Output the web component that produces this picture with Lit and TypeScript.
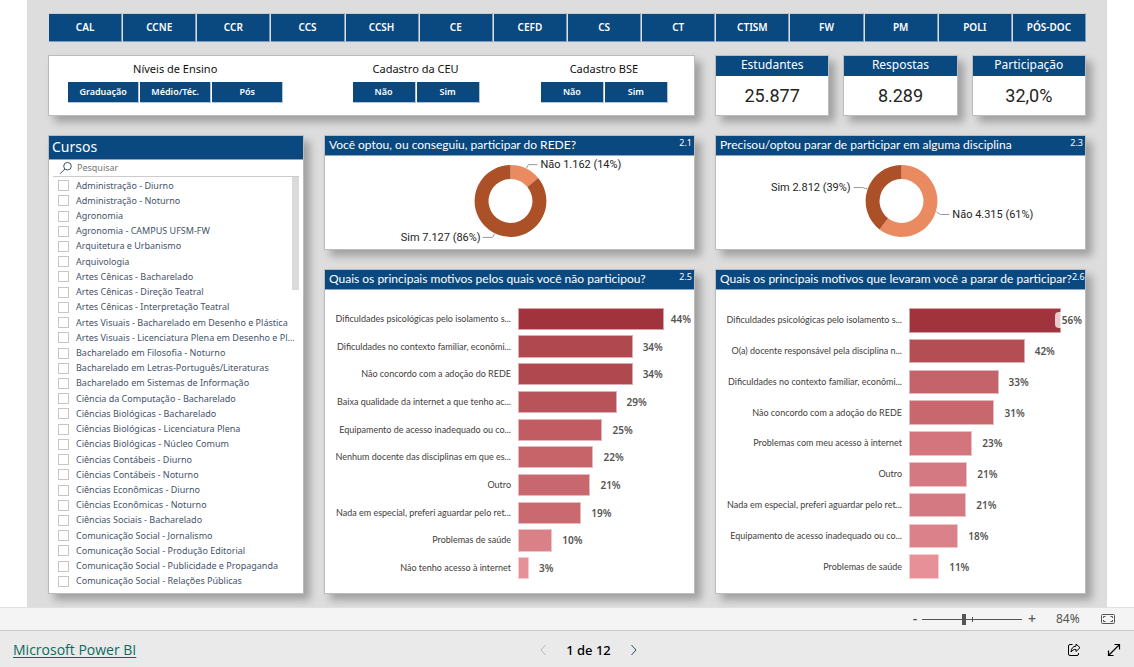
import { LitElement, html, css, svg } from "lit";
import { customElement, property } from "lit/decorators.js";
import { styleMap } from "lit/directives/style-map.js";

const UNITS = ["CAL", "CCNE", "CCR", "CCS", "CCSH", "CE", "CEFD", "CS", "CT", "CTISM", "FW", "PM", "POLI", "PÓS-DOC"];

const FILTERS = [
  { title: "Níveis de Ensino", kind: "wide", options: ["Graduação", "Médio/Téc.", "Pós"] },
  { title: "Cadastro da CEU", kind: "narrow", options: ["Não", "Sim"] },
  { title: "Cadastro BSE", kind: "narrow", options: ["Não", "Sim"] },
];

const KPIS = [
  { title: "Estudantes", value: "25.877" },
  { title: "Respostas", value: "8.289" },
  { title: "Participação", value: "32,0%" },
];

const COURSES = [
  "Administração - Diurno",
  "Administração - Noturno",
  "Agronomia",
  "Agronomia - CAMPUS UFSM-FW",
  "Arquitetura e Urbanismo",
  "Arquivologia",
  "Artes Cênicas - Bacharelado",
  "Artes Cênicas - Direção Teatral",
  "Artes Cênicas - Interpretação Teatral",
  "Artes Visuais - Bacharelado em Desenho e Plástica",
  "Artes Visuais - Licenciatura Plena em Desenho e Pl...",
  "Bacharelado em Filosofia - Noturno",
  "Bacharelado em Letras-Português/Literaturas",
  "Bacharelado em Sistemas de Informação",
  "Ciência da Computação - Bacharelado",
  "Ciências Biológicas - Bacharelado",
  "Ciências Biológicas - Licenciatura Plena",
  "Ciências Biológicas - Núcleo Comum",
  "Ciências Contábeis - Diurno",
  "Ciências Contábeis - Noturno",
  "Ciências Econômicas - Diurno",
  "Ciências Econômicas - Noturno",
  "Ciências Sociais - Bacharelado",
  "Comunicação Social - Jornalismo",
  "Comunicação Social - Produção Editorial",
  "Comunicação Social - Publicidade e Propaganda",
  "Comunicação Social - Relações Públicas",
];

interface Bar {
  label: string;
  value: number;
  length: number;
  color: string;
}

const NOT_JOINED: Bar[] = [
  { label: "Dificuldades psicológicas pelo isolamento s...", value: 44, length: 145, color: "#a0333c" },
  { label: "Dificuldades no contexto familiar, econômi...", value: 34, length: 114, color: "#b0494f" },
  { label: "Não concordo com a adoção do REDE", value: 34, length: 114, color: "#b0494f" },
  { label: "Baixa qualidade da internet a que tenho ac...", value: 29, length: 98, color: "#b9535a" },
  { label: "Equipamento de acesso inadequado ou co...", value: 25, length: 84, color: "#c15c63" },
  { label: "Nenhum docente das disciplinas em que es...", value: 22, length: 75, color: "#c6646a" },
  { label: "Outro", value: 21, length: 72, color: "#c8676d" },
  { label: "Nada em especial, preferi aguardar pelo ret...", value: 19, length: 63, color: "#ca6a70" },
  { label: "Problemas de saúde", value: 10, length: 34, color: "#da8087" },
  { label: "Não tenho acesso à internet", value: 3, length: 11, color: "#e79098" },
];

const STOPPED: Bar[] = [
  { label: "Dificuldades psicológicas pelo isolamento s...", value: 56, length: 151, color: "#a0333c" },
  { label: "O(a) docente responsável pela disciplina n...", value: 42, length: 115, color: "#b34e54" },
  { label: "Dificuldades no contexto familiar, econômi...", value: 33, length: 89, color: "#c4636a" },
  { label: "Não concordo com a adoção do REDE", value: 31, length: 85, color: "#c8676d" },
  { label: "Problemas com meu acesso à internet", value: 23, length: 63, color: "#d4757d" },
  { label: "Outro", value: 21, length: 58, color: "#d47981" },
  { label: "Nada em especial, preferi aguardar pelo ret...", value: 21, length: 57, color: "#d47981" },
  { label: "Equipamento de acesso inadequado ou co...", value: 18, length: 49, color: "#db8189" },
  { label: "Problemas de saúde", value: 11, length: 30, color: "#e79098" },
];

const AXIS_LENGTH = 175;

@customElement("bar-chart")
export class BarChart extends LitElement {
  @property({ attribute: false }) bars: Bar[] = [];

  static styles = css`
    :host {
      flex: 1;
      display: grid;
      grid-auto-rows: 1fr;
      padding: 15px 0 11px;
    }
    .row {
      display: grid;
      grid-template-columns: minmax(0, 186fr) minmax(0, 176fr);
      column-gap: 7px;
      align-items: center;
      min-height: 0;
    }
    .label {
      display: flex;
      justify-content: flex-end;
      font-family: "Lato", sans-serif;
      font-size: 9px;
      line-height: 12px;
      white-space: nowrap;
      color: #3f3d3b;
    }
    .track {
      display: flex;
      align-items: center;
      height: 80%;
    }
    .bar {
      box-sizing: border-box;
      height: 100%;
      flex: none;
      border: 1px solid rgba(255, 255, 255, 0.55);
    }
    .value {
      margin-left: 10px;
      font-size: 10px;
      line-height: 16px;
      font-weight: 600;
      color: #555351;
    }
    .longest {
      margin-left: 7px;
    }
    .overlap {
      margin-left: -6px;
      padding-left: 7px;
      border-radius: 4px;
      background: rgba(255, 255, 255, 0.75);
    }
  `;

  render() {
    return this.bars.map((b) => {
      const place = b.value > 50 ? "overlap" : b.value > 43 ? "longest" : "";
      return html`<div class="row">
        <span class="label">${b.label}</span>
        <div class="track">
          <div class="bar" style=${styleMap({ width: `${(b.length / AXIS_LENGTH) * 100}%`, background: b.color })}></div>
          <span class="value ${place}">${b.value}%</span>
        </div>
      </div>`;
    });
  }
}

const LIGHT = "#e98a60";
const DARK = "#ab5027";

@customElement("donut-chart")
export class DonutChart extends LitElement {
  @property({ type: Number }) no = 0;
  @property({ attribute: false }) labels: { text: string; x: number; y: number; anchor: string; line: string }[] = [];

  static styles = css`
    :host {
      flex: 1;
      display: flex;
      justify-content: center;
    }
    .plot {
      display: block;
      width: 370px;
      height: 93px;
    }
    .label {
      font-family: "Roboto", sans-serif;
      font-size: 11px;
      fill: #252423;
    }
    .leader {
      fill: none;
      stroke: #999;
    }
  `;

  private slice(from: number, to: number, color: string) {
    const at = (t: number, r: number) => {
      const a = t * 2 * Math.PI;
      return `${(186 + r * Math.sin(a)).toFixed(2)} ${(45 - r * Math.cos(a)).toFixed(2)}`;
    };
    const large = to - from > 0.5 ? 1 : 0;
    return svg`<path fill=${color} d="M${at(from, 36)} A36 36 0 ${large} 1 ${at(to, 36)} L${at(to, 22)} A22 22 0 ${large} 0 ${at(from, 22)} Z"></path>`;
  }

  render() {
    return html`<svg class="plot" viewBox="0 0 370 93" role="img" aria-label="Sim e Não">
      ${this.slice(0, this.no, LIGHT)} ${this.slice(this.no, 1, DARK)}
      ${this.labels.map(
        (l) => svg`<path class="leader" d=${l.line}></path>
          <text class="label" x=${l.x} y=${l.y} text-anchor=${l.anchor}>${l.text}</text>`
      )}
    </svg>`;
  }
}

const JOINED_LABELS = [
  { text: "Não 1.162 (14%)", x: 216, y: 12, anchor: "start", line: "M202 12 L204 8.5 H213" },
  { text: "Sim 7.127 (86%)", x: 156, y: 85, anchor: "end", line: "M158 81.5 H168 L170 78" },
];

const STOP_LABELS = [
  { text: "Sim 2.812 (39%)", x: 135, y: 35, anchor: "end", line: "M138 31.5 H147 L152 33" },
  { text: "Não 4.315 (61%)", x: 237, y: 62, anchor: "start", line: "M221 56 L225 58.5 H234" },
];

@customElement("app-root")
export class AppRoot extends LitElement {
  static styles = css`
    :host {
      display: flex;
      flex-direction: column;
      min-height: 100vh;
      background: #fff;
      font-family: "Noto Sans", sans-serif;
      color: #252423;
    }
    * {
      box-sizing: border-box;
    }
    button {
      margin: 0;
      padding: 0;
      border: 0;
      background: none;
      font: inherit;
      color: inherit;
    }
    h2 {
      margin: 0;
      font-weight: 400;
    }
    .report {
      flex: 1;
      display: flex;
      flex-direction: column;
      gap: 13px;
      margin: 0 27px;
      padding: 13px 21px;
      background: #ddd;
    }
    .units {
      display: grid;
      grid-template-columns: repeat(14, 1fr);
      gap: 1px;
      padding-left: 1px;
    }
    .unit {
      height: 29px;
      padding-bottom: 1px;
      background: #0a4880;
      border: 1px solid #7c9cbc;
      border-top-color: #c4ccd6;
      border-left-width: 0;
      font-size: 10px;
      line-height: 24px;
      font-weight: 600;
      color: #fff;
    }
    .board {
      flex: 1;
      display: grid;
      grid-template-columns: 256fr 371fr 371fr;
      grid-template-rows: 61px 115px 1fr;
      gap: 19px 20px;
    }
    .card {
      display: flex;
      flex-direction: column;
      min-width: 0;
      background: #fff;
      border: 1px solid #bcbcbc;
      box-shadow: 6px 6px 8px rgba(0, 0, 0, 0.28);
    }
    .filters {
      grid-column: span 2;
      display: grid;
      grid-template-columns: 252fr 228fr 148fr;
      padding: 3px 16px 0 0;
    }
    .filter {
      margin: 0;
      padding: 0;
      border: 0;
      min-width: 0;
    }
    .filter-title {
      padding: 0;
      width: 100%;
      font-size: 11px;
      line-height: 20px;
      text-align: center;
      color: #111;
    }
    .options {
      display: flex;
      justify-content: center;
      gap: 1px;
      padding: 3px 0 0 1px;
    }
    .option {
      height: 21px;
      background: #0a4880;
      border: 1px solid #b4c4d6;
      border-width: 0 1px 1px 0;
      font-size: 9px;
      line-height: 20px;
      font-weight: 600;
      color: #fff;
    }
    .wide {
      width: 71px;
    }
    .narrow {
      width: 63px;
    }
    .kpis {
      display: grid;
      grid-template-columns: repeat(3, 1fr);
      gap: 14px;
    }
    .kpi-title {
      height: 20px;
      background: #0a4880;
      font-size: 12px;
      line-height: 17px;
      text-align: center;
      color: #fff;
    }
    .kpi-value {
      flex: 1;
      display: grid;
      place-items: center;
      font-family: "Roboto", sans-serif;
      font-size: 18px;
      line-height: 20px;
    }
    .head {
      display: flex;
      justify-content: space-between;
      height: 20px;
      padding: 0 2px 0 4px;
      background: #0a4880;
      border-bottom: 1px solid #8fa9c4;
      font-family: "Lato", sans-serif;
      color: #fff;
      white-space: nowrap;
    }
    .title {
      font-size: 12px;
      line-height: 17px;
    }
    .code {
      font-family: "Noto Sans", sans-serif;
      font-size: 9px;
      line-height: 14px;
    }
    .courses {
      grid-row: span 2;
    }
    .courses-title {
      height: 24px;
      padding: 0 3px;
      background: #0a4880;
      border-bottom: 1px solid #8fa9c4;
      font-size: 14px;
      line-height: 21px;
      color: #fff;
    }
    .search {
      display: flex;
      align-items: center;
      gap: 4px;
      height: 17px;
      margin: 0 4px;
      padding-left: 6px;
      border-bottom: 1px solid #ccc;
    }
    .search-icon {
      flex: none;
      width: 14px;
      height: 14px;
    }
    .search-box {
      flex: 1;
      min-width: 0;
      padding: 0;
      border: 0;
      outline: 0;
      background: none;
      font: 9px/12px "Noto Sans", sans-serif;
    }
    .search-box::placeholder {
      color: #777;
      opacity: 1;
    }
    .list {
      position: relative;
      flex: 1;
      display: grid;
      grid-auto-rows: 1fr;
      padding: 1px 4px 4px 9px;
    }
    .scroll {
      position: absolute;
      top: 0;
      right: 4px;
      width: 7px;
      height: 113px;
      background: #dadada;
    }
    .course {
      display: flex;
      align-items: center;
      gap: 7px;
      min-height: 0;
      font-size: 9px;
      line-height: 12px;
      white-space: nowrap;
      color: #44546a;
    }
    .tick {
      appearance: none;
      flex: none;
      width: 11px;
      height: 11px;
      margin: 0;
      border: 1px solid #c8c6c4;
      background: #fff;
    }
    .zoombar {
      display: flex;
      align-items: center;
      justify-content: flex-end;
      height: 24px;
      padding-right: 18px;
      background: #f4f4f4;
      border-top: 1px solid #e0e0e0;
      border-bottom: 1px solid #c8c8c8;
      color: #555;
    }
    .step {
      width: 10px;
      height: 20px;
      font-size: 14px;
      line-height: 20px;
      font-weight: 500;
    }
    .slider {
      position: relative;
      display: flex;
      margin: 0 5px 0 2px;
    }
    .slider::after {
      content: "";
      position: absolute;
      left: 50px;
      top: 8px;
      width: 1px;
      height: 5px;
      background: #555;
    }
    .range {
      appearance: none;
      width: 100px;
      height: 20px;
      margin: 0;
      background: linear-gradient(#555, #555) center / 100% 1px no-repeat;
    }
    .range::-webkit-slider-thumb {
      appearance: none;
      width: 4px;
      height: 11px;
      background: #555;
    }
    .percent {
      width: 24px;
      margin: 0 20px 0 19px;
      font-size: 12px;
      line-height: 20px;
    }
    .icon {
      display: block;
      width: 16px;
      height: 16px;
      fill: none;
      stroke: currentColor;
    }
    .footer {
      display: grid;
      grid-template-columns: 1fr auto 1fr;
      align-items: center;
      height: 36px;
      padding: 2px 12px 0 13px;
      background: #eaeaea;
      color: #000;
    }
    .brand {
      justify-self: start;
      font-family: "Open Sans", sans-serif;
      font-size: 14px;
      line-height: 20px;
      color: #0b6a5c;
      text-decoration: underline;
      text-underline-offset: 2px;
    }
    .pager {
      display: flex;
      align-items: center;
      gap: 15px;
      margin-left: 42px;
      font-size: 13px;
      line-height: 20px;
      font-weight: 500;
    }
    .previous {
      color: #b8b8b8;
    }
    .next {
      color: #205060;
    }
    .actions {
      justify-self: end;
      display: flex;
      gap: 24px;
    }
  `;

  private head(title: string, code: string) {
    return html`<div class="head"><h2 class="title">${title}</h2><span class="code">${code}</span></div>`;
  }

  render() {
    return html`
      <main class="report">
        <nav class="units">${UNITS.map((u) => html`<button class="unit">${u}</button>`)}</nav>
        <div class="board">
          <section class="card filters">
            ${FILTERS.map(
              (f) => html`<fieldset class="filter">
                <legend class="filter-title">${f.title}</legend>
                <div class="options">${f.options.map((o) => html`<button class="option ${f.kind}">${o}</button>`)}</div>
              </fieldset>`
            )}
          </section>
          <div class="kpis">
            ${KPIS.map(
              (k) => html`<section class="card">
                <h2 class="kpi-title">${k.title}</h2>
                <div class="kpi-value">${k.value}</div>
              </section>`
            )}
          </div>
          <section class="card courses">
            <h2 class="courses-title">Cursos</h2>
            <div class="search">
              <svg class="search-icon" viewBox="0 0 14 14" fill="none" stroke="#3c5068" aria-hidden="true">
                <circle cx="8.5" cy="5.2" r="3.8"></circle>
                <path d="M5.8 8 L1 12.8"></path>
              </svg>
              <input class="search-box" type="search" placeholder="Pesquisar" aria-label="Pesquisar" />
            </div>
            <div class="list">
              ${COURSES.map((c) => html`<label class="course"><input class="tick" type="checkbox" />${c}</label>`)}
              <div class="scroll"></div>
            </div>
          </section>
          <section class="card">
            ${this.head("Você optou, ou conseguiu, participar do REDE?", "2.1")}
            <donut-chart .no=${0.14} .labels=${JOINED_LABELS}></donut-chart>
          </section>
          <section class="card">
            ${this.head("Precisou/optou parar de participar em alguma disciplina", "2.3")}
            <donut-chart .no=${0.605} .labels=${STOP_LABELS}></donut-chart>
          </section>
          <section class="card">
            ${this.head("Quais os principais motivos pelos quais você não participou?", "2.5")}
            <bar-chart .bars=${NOT_JOINED}></bar-chart>
          </section>
          <section class="card">
            ${this.head("Quais os principais motivos que levaram você a parar de participar?", "2.6")}
            <bar-chart .bars=${STOPPED}></bar-chart>
          </section>
        </div>
      </main>
      <div class="zoombar">
        <button class="step">-</button>
        <div class="slider"><input class="range" type="range" min="0" max="100" value="42" aria-label="Zoom" /></div>
        <button class="step">+</button>
        <span class="percent">84%</span>
        <button aria-label="Ajustar à página">
          <svg class="icon" viewBox="0 0 16 16">
            <rect x="1.5" y="3.5" width="13" height="9" rx="1"></rect>
            <path d="M3.5 7 V5.5 H5.5 M10.5 5.5 H12.5 V7 M12.5 9 V10.5 H10.5 M5.5 10.5 H3.5 V9"></path>
          </svg>
        </button>
      </div>
      <footer class="footer">
        <a class="brand" href="#">Microsoft Power BI</a>
        <div class="pager">
          <button class="previous" aria-label="Página anterior">
            <svg class="icon" viewBox="0 0 16 16"><path d="M10.5 3 L6 8 L10.5 13"></path></svg>
          </button>
          <span>1 de 12</span>
          <button class="next" aria-label="Próxima página">
            <svg class="icon" viewBox="0 0 16 16"><path d="M5.5 3 L10 8 L5.5 13"></path></svg>
          </button>
        </div>
        <div class="actions">
          <button aria-label="Compartilhar">
            <svg class="icon" viewBox="0 0 16 16">
              <path d="M6.5 2.5 H4 a1.5 1.5 0 0 0 -1.5 1.5 V12 a1.5 1.5 0 0 0 1.5 1.5 H11 a1.5 1.5 0 0 0 1.5 -1.5 V11"></path>
              <path d="M10 2 L14 5.7 L10 9.5 V7.5 C7.5 7.3 6.2 8.2 5 10 C5.2 6.5 7 4.3 10 4.1 Z"></path>
            </svg>
          </button>
          <button aria-label="Tela inteira">
            <svg class="icon" viewBox="0 0 16 16">
              <path d="M2.5 13.5 L13.5 2.5 M8.5 2.5 H13.5 V7.5 M2.5 8.5 V13.5 H7.5" stroke-width="1.2"></path>
            </svg>
          </button>
        </div>
      </footer>
    `;
  }
}
